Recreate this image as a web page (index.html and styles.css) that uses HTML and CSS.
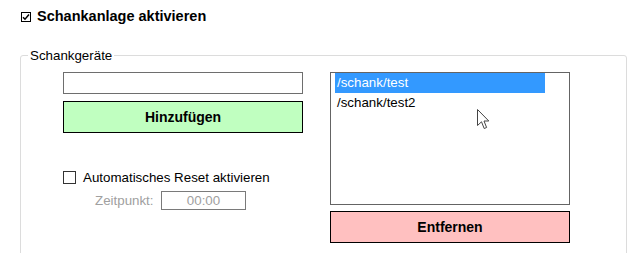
FILE: index.html
```html
<!DOCTYPE html>
<html lang="de">
<head>
<meta charset="utf-8">
<title>Schankanlage</title>
<link rel="stylesheet" href="styles.css">
</head>
<body>
<div class="page">
  <label class="title">
    <svg class="title-check" width="10" height="10" viewBox="0 0 10 10"><rect x="0.5" y="0.5" width="9" height="9" fill="#fff" stroke="#000"/><path d="M2 5.2 L4 7.2 L8 2.6" fill="none" stroke="#000" stroke-width="1.5"/></svg>
    <span>Schankanlage aktivieren</span>
  </label>
  <fieldset class="group">
    <legend class="group-legend">Schankgeräte</legend>
    <div class="group-body">
      <div class="col">
        <input class="text-input" type="text">
        <button class="btn btn-add" type="button">Hinzufügen</button>
        <label class="reset-row"><span class="box"></span><span>Automatisches Reset aktivieren</span></label>
        <div class="time-row"><span class="time-label">Zeitpunkt:</span><span class="time-input">00:00</span></div>
      </div>
      <div class="col">
        <ul class="listbox">
          <li class="item selected">/schank/test</li>
          <li class="item">/schank/test2</li>
        </ul>
        <button class="btn btn-remove" type="button">Entfernen</button>
      </div>
    </div>
  </fieldset>
  <svg class="cursor" width="13" height="21" viewBox="0 0 13 21"><path d="M0.5 0.5 L0.5 16.5 L4.5 12.8 L7.2 19.5 L9.6 18.5 L7 12 L11.8 12 Z" fill="#fff" stroke="#444" stroke-width="1" stroke-linejoin="miter"/></svg>
</div>
</body>
</html>
```

FILE: styles.css
```css
html, body {
  margin: 0;
  padding: 0;
  background: #fff;
}

.page {
  position: relative;
  width: 641px;
  height: 253px;
  overflow: hidden;
  font-family: "Liberation Sans", Arial, sans-serif;
  font-size: 13.33px;
  color: #000;
}

.title {
  display: flex;
  align-items: center;
  gap: 6px;
  padding: 8px 0 0 21px;
  height: 17px;
  font-weight: bold;
  font-size: 14.5px;
  line-height: 17px;
}

.title-check {
  display: block;
  flex: none;
}

.group {
  box-sizing: border-box;
  margin: 23px 0 0 20px;
  padding: 0;
  width: 607px;
  min-width: 0;
  border: 1px solid #dcdcdc;
  border-radius: 3px;
}

.group-legend {
  margin-left: 7px;
  padding: 0 2px;
  line-height: 15px;
  font-size: 13.33px;
}

.group-body {
  display: flex;
  gap: 27px;
  padding: 9px 0 30px 42px;
}

.col {
  display: flex;
  flex-direction: column;
  width: 240px;
}

.text-input {
  box-sizing: border-box;
  display: block;
  width: 240px;
  height: 22px;
  margin: 0;
  padding: 0 3px;
  border: 1px solid #6e6e6e;
  background: #fff;
  font: inherit;
  outline: none;
}

.btn {
  box-sizing: border-box;
  display: block;
  width: 240px;
  height: 32px;
  margin: 0;
  padding: 0;
  border: 1px solid #000;
  font-family: "Liberation Sans", Arial, sans-serif;
  font-weight: bold;
  font-size: 14px;
  color: #000;
  text-align: center;
}

.btn-add {
  margin-top: 7px;
  background: #c0ffc0;
}

.btn-remove {
  margin-top: 6px;
  background: #ffc0c0;
}

.reset-row {
  display: flex;
  align-items: flex-start;
  gap: 7px;
  margin-top: 37px;
  line-height: 16px;
}

.box {
  box-sizing: border-box;
  flex: none;
  width: 13px;
  height: 13px;
  margin-top: 1px;
  border: 1px solid #333;
  background: #fff;
}

.time-row {
  display: flex;
  align-items: center;
  margin-top: 5px;
  padding-left: 32px;
  color: #a0a0a0;
  line-height: 15px;
}

.time-label {
  width: 66px;
}

.time-input {
  box-sizing: border-box;
  width: 85px;
  height: 19px;
  border: 1px solid #7a7a7a;
  text-align: center;
  line-height: 17px;
}

.listbox {
  box-sizing: border-box;
  list-style: none;
  margin: 0;
  padding: 0 0 0 4px;
  width: 240px;
  height: 133px;
  border: 1px solid #646464;
  background: #fff;
}

.item {
  width: 210px;
  height: 20px;
  line-height: 20px;
  padding-left: 2px;
  box-sizing: border-box;
  white-space: nowrap;
}

.selected {
  background: #3399ff;
  color: #fff;
}

.cursor {
  position: absolute;
  left: 477px;
  top: 109px;
}
```
